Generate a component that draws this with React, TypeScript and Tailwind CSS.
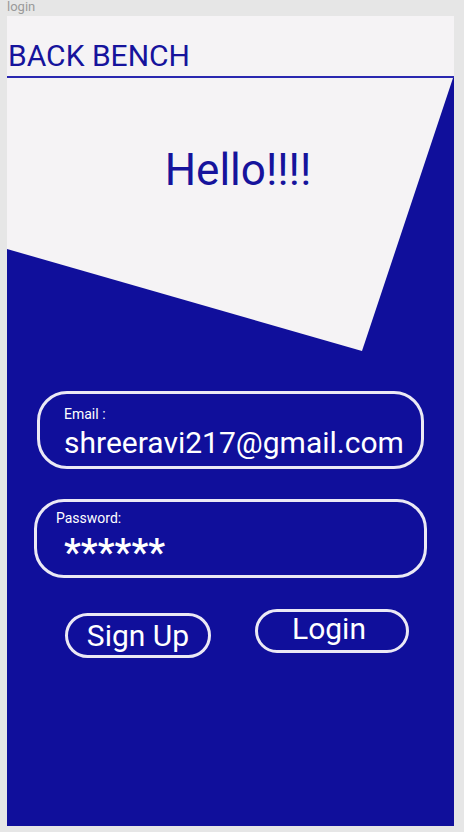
const font = { fontFamily: "Roboto, 'Liberation Sans', sans-serif" };

const Field = ({ label, value, box, valueCls }: { label: string; value: string; box: string; valueCls: string }) => (
  <div className={`border-[3px] border-[#ebe9f5] rounded-[30px] ${box}`}>
    <p className="text-white text-[14px] leading-none">{label}</p>
    <p className={`text-white leading-none ${valueCls}`}>{value}</p>
  </div>
);

const App = () => {
  return (
    <div className="w-[464px] h-[832px] bg-[#e6e6e6] relative overflow-hidden" style={font}>
      <p className="text-[#9a9a9a] text-[13px] leading-none pl-[7px] h-[16px]">login</p>
      <div className="ml-[7px] w-[447px] h-[810px] bg-[#f5f3f5] flex flex-col">
        <div className="h-[60px] flex items-end">
          <h1 className="text-[#16139c] text-[30px] leading-none pl-[1px] pb-[5px]">BACK BENCH</h1>
        </div>
        <div className="h-[2px] bg-[#2a28b0]" />
        <div className="flex-1 bg-[#100f9b] relative flex flex-col">
          <svg className="absolute top-0 left-0" width="447" height="280" viewBox="0 0 447 280">
            <polygon points="0,0 446,0 355,273 0,171" fill="#f5f3f5" />
          </svg>
          <div className="relative h-[273px]">
            <p className="text-[#16139c] text-[44px] leading-none text-center pt-[70px] pl-[15px]">Hello!!!!</p>
          </div>
          <div className="relative mt-[40px] flex flex-col">
            <Field
              label="Email :"
              value="shreeravi217@gmail.com"
              box="ml-[30px] w-[387px] h-[78px] pl-[24px] pt-[13px]"
              valueCls="text-[30px] mt-[7px]"
            />
            <Field
              label="Password:"
              value="******"
              box="ml-[27px] w-[393px] h-[79px] pl-[19px] pt-[9px] mt-[30px]"
              valueCls="text-[38px] font-medium mt-[9px] pl-[8px] h-[30px]"
            />
            <div className="flex items-start mt-[31px]">
              <button className="ml-[58px] mt-[4px] w-[146px] h-[45px] border-[3px] border-[#ebe9f5] rounded-full text-white text-[30px] leading-none">Sign Up</button>
              <button className="ml-[44px] w-[154px] h-[44px] border-[3px] border-[#ebe9f5] rounded-full text-white text-[30px] leading-none pb-[4px] pr-[6px]">Login</button>
            </div>
          </div>
        </div>
      </div>
    </div>
  );
};

export default App;
